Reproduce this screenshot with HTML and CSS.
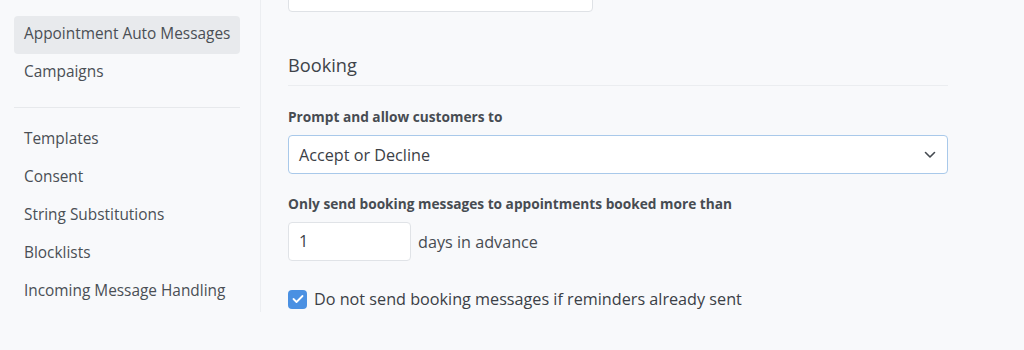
FILE: index.html
```html
<!DOCTYPE html>
<html>
<head>
<meta charset="utf-8">
<link rel="stylesheet" href="styles.css">
</head>
<body>
<div class="page">
  <nav class="sidebar">
    <ul class="nav-group">
      <li class="nav-item active">Appointment Auto Messages</li>
      <li class="nav-item">Campaigns</li>
    </ul>
    <hr class="nav-divider">
    <ul class="nav-group">
      <li class="nav-item">Templates</li>
      <li class="nav-item">Consent</li>
      <li class="nav-item">String Substitutions</li>
      <li class="nav-item">Blocklists</li>
      <li class="nav-item">Incoming Message Handling</li>
    </ul>
  </nav>
  <main class="main">
    <div class="top-input"></div>
    <h2 class="section-title">Booking</h2>
    <div class="field">
      <label class="field-label">Prompt and allow customers to</label>
      <div class="select">
        <span>Accept or Decline</span>
        <svg class="chevron" width="12" height="8" viewBox="0 0 12 8"><path d="M1.5 1.5 L6 6 L10.5 1.5" fill="none" stroke="#444a50" stroke-width="1.6" stroke-linecap="round" stroke-linejoin="round"/></svg>
      </div>
    </div>
    <div class="field">
      <label class="field-label">Only send booking messages to appointments booked more than</label>
      <div class="inline-row">
        <div class="num-input">1</div>
        <span class="suffix">days in advance</span>
      </div>
    </div>
    <div class="check-row">
      <span class="checkbox">
        <svg width="12" height="10" viewBox="0 0 12 10"><path d="M1.5 5 L4.5 8 L10.5 2" fill="none" stroke="#fff" stroke-width="1.8" stroke-linecap="round" stroke-linejoin="round"/></svg>
      </span>
      <span class="check-label">Do not send booking messages if reminders already sent</span>
    </div>
  </main>
</div>
</body>
</html>
```

FILE: styles.css
```css
* { box-sizing: border-box; }
html, body { margin: 0; padding: 0; }
body {
  background: #f8f9fb;
  font-family: "Open Sans", "Noto Sans", sans-serif;
  color: #454a50;
  width: 1024px;
  height: 350px;
  overflow: hidden;
}
.page {
  display: flex;
  align-items: flex-start;
}
.sidebar {
  width: 261px;
  padding: 16px 20px 0 14px;
  border-right: 1px solid #eceef1;
  height: 312px;
}
.nav-group {
  list-style: none;
  margin: 0;
  padding: 0;
}
.nav-item {
  height: 38px;
  line-height: 36px;
  padding-left: 10px;
  font-size: 15.4px;
  color: #4a4f55;
  border-radius: 4px;
  white-space: nowrap;
}
.nav-item.active {
  background: #e8eaed;
}
.nav-divider {
  border: 0;
  border-top: 1px solid #e7e9ec;
  margin: 15px 0 13px;
}
.main {
  padding-left: 27px;
  width: 687px;
}
.top-input {
  width: 305px;
  height: 38px;
  margin-top: -26px;
  background: #fff;
  border: 1px solid #dfe2e6;
  border-radius: 4px;
}
.section-title {
  margin: 41px 0 0;
  font-size: 18.2px;
  font-weight: 500;
  color: #3e4349;
  padding-bottom: 8px;
  border-bottom: 1px solid #ebedf0;
  line-height: 24px;
}
.field {
  margin-top: 22px;
}
.field + .field { margin-top: 21px; }
.field-label {
  display: block;
  font-size: 13.7px;
  font-weight: 700;
  color: #474c52;
  line-height: 18px;
  margin-bottom: 9px;
}
.select {
  height: 39px;
  background: #fff;
  border: 1px solid #a9c9ea;
  border-radius: 4px;
  display: flex;
  align-items: center;
  justify-content: space-between;
  padding: 0 11px 0 10px;
  font-size: 16.2px;
  color: #3b4046;
}
.inline-row {
  display: flex;
  align-items: center;
  gap: 7px;
}
.num-input {
  width: 123px;
  height: 39px;
  background: #fff;
  border: 1px solid #e0e3e7;
  border-radius: 4px;
  padding-left: 10px;
  font-size: 16.2px;
  line-height: 37px;
  color: #3b4046;
}
.suffix {
  font-size: 16.2px;
  color: #474c52;
}
.check-row {
  display: flex;
  align-items: center;
  gap: 7px;
  margin-top: 27px;
}
.checkbox {
  width: 19px;
  height: 19px;
  border-radius: 4px;
  background: #4a90e2;
  display: flex;
  align-items: center;
  justify-content: center;
}
.check-label {
  font-size: 16.2px;
  color: #3b4046;
}
```
